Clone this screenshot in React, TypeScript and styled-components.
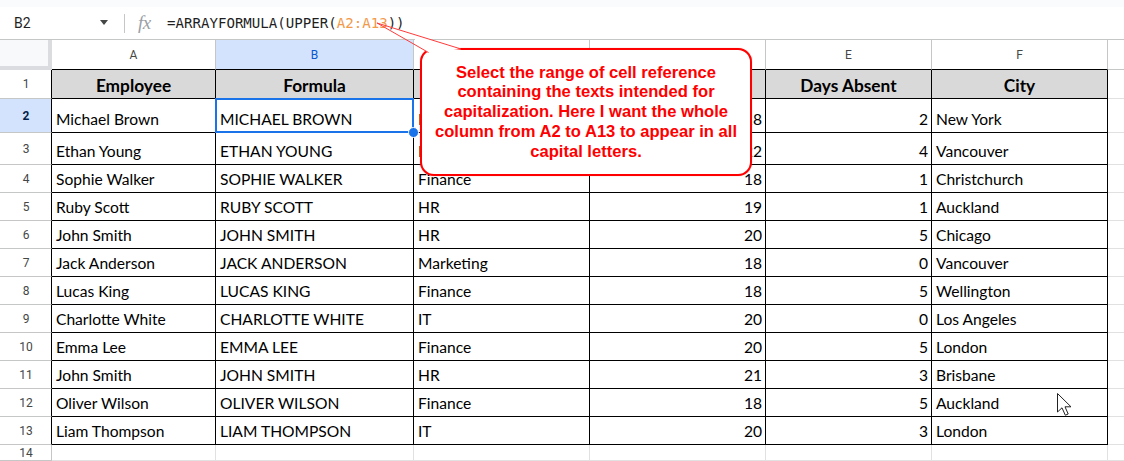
import React from "react";
import styled, { createGlobalStyle, css } from "styled-components";

const GlobalStyle = createGlobalStyle`
  html, body { margin: 0; padding: 0; background: #ffffff; overflow: hidden; }
  * { box-sizing: border-box; }
`;

const Page = styled.div`
  position: relative;
  width: 1124px;
  height: 461px;
  overflow: hidden;
  background: #ffffff;
`;

const TopStrip = styled.div`
  height: 7px;
  background: #f9fbfd;
`;

const FormulaBar = styled.div`
  display: flex;
  align-items: center;
  height: 33px;
  border-bottom: 1px solid #c4c7c5;
  background: #ffffff;
`;

const NameBox = styled.div`
  display: flex;
  align-items: center;
  justify-content: space-between;
  width: 112px;
  padding: 0 4px 0 14px;
  font-family: Roboto, "Liberation Sans", sans-serif;
  font-size: 14px;
  color: #1f1f1f;
  margin-top: -1px;
`;

const Caret = styled.span`
  width: 0;
  height: 0;
  border-left: 4.5px solid transparent;
  border-right: 4.5px solid transparent;
  border-top: 5px solid #444746;
`;

const Divider = styled.span`
  width: 1px;
  height: 19px;
  background: #c4c7c5;
  margin: 0 13px 0 12px;
`;

const Fx = styled.span`
  display: inline-block;
  width: 17px;
  font-family: "Liberation Serif", serif;
  font-style: italic;
  font-size: 19px;
  color: #9aa0a6;
  margin-right: 12px;
  letter-spacing: -0.5px;
`;

const Formula = styled.span`
  font-family: "DejaVu Sans Mono", "Liberation Mono", monospace;
  font-size: 14.1px;
  color: #1f1f1f;
  margin-top: -1px;
`;

const Ref = styled.span`
  color: #f2994a;
`;

const Sheet = styled.div`
  display: grid;
  grid-template-columns: 52px 164px 198px 176px 176px 166px 176px 1fr;
  grid-template-rows: 30px 29px 34px 32px repeat(10, 28px) 16px;
`;

const Corner = styled.div`
  background: #f8f9fa;
  border-right: 4px solid #dadce0;
  border-bottom: 4px solid #dadce0;
`;

const headerFont = css`
  font-family: Roboto, "Liberation Sans", sans-serif;
  font-size: 12px;
  display: flex;
  align-items: center;
  justify-content: center;
`;

const ColHeader = styled.div<{ $selected?: boolean; $edge?: boolean; $last?: boolean }>`
  ${headerFont};
  color: ${(p) => (p.$selected ? "#0b57d0" : "#444746")};
  background: ${(p) => (p.$selected ? "#d3e3fd" : "#ffffff")};
  border-right: ${(p) => (p.$last ? "none" : "1px solid #c4c7c5")};
  border-bottom: 1px solid ${(p) => (p.$edge ? "#000000" : "#c4c7c5")};
  padding-top: 1px;
`;

const RowHeader = styled.div<{ $selected?: boolean; $edge?: boolean }>`
  ${headerFont};
  color: ${(p) => (p.$selected ? "#041e49" : "#444746")};
  font-weight: ${(p) => (p.$selected ? 700 : 400)};
  background: ${(p) => (p.$selected ? "#d3e3fd" : "#ffffff")};
  border-right: 1px solid ${(p) => (p.$edge ? "#000000" : "#c4c7c5")};
  border-bottom: 1px solid #c4c7c5;
  padding-left: 1px;
`;

type Kind = "head" | "text" | "num" | "empty";

const Cell = styled.div<{ $kind: Kind; $boxed?: boolean; $last?: boolean; $selected?: boolean }>`
  position: relative;
  display: flex;
  align-items: flex-end;
  min-width: 0;
  overflow: ${(p) => (p.$selected ? "visible" : "hidden")};
  white-space: nowrap;
  font-family: Lato, "Open Sans", sans-serif;
  font-size: 15.6px;
  line-height: 18px;
  color: #000000;
  padding: 0 3px 4px 4px;
  border-right: ${(p) => (p.$last ? "none" : `1px solid ${p.$boxed ? "#000000" : "#e1e1e1"}`)};
  border-bottom: 1px solid ${(p) => (p.$boxed ? "#000000" : "#e1e1e1")};
  ${(p) =>
    p.$kind === "head" &&
    css`
      background: #d9d9d9;
      font-weight: 700;
      font-size: 17.3px;
      justify-content: center;
      padding: 0 0 3px 0;
    `}
  ${(p) =>
    p.$kind === "num" &&
    css`
      justify-content: flex-end;
    `}
  ${(p) =>
    p.$selected &&
    css`
      z-index: 2;
      &::before {
        content: "";
        position: absolute;
        left: -1px;
        top: -1px;
        right: -1px;
        bottom: -1px;
        border: 2px solid #1a73e8;
        pointer-events: none;
      }
      &::after {
        content: "";
        position: absolute;
        right: -6px;
        bottom: -6px;
        width: 9px;
        height: 9px;
        border-radius: 50%;
        background: #1a73e8;
        border: 1px solid #ffffff;
      }
    `}
`;

const Callout = styled.div`
  position: absolute;
  left: 420px;
  top: 48px;
  width: 332px;
  height: 128px;
  border: 2px solid #ff0000;
  border-radius: 14px;
  background: #ffffff;
  display: flex;
  align-items: center;
  justify-content: center;
  text-align: center;
  font-family: "Liberation Sans", Arial, sans-serif;
  font-weight: 700;
  font-size: 16.6px;
  line-height: 19.75px;
  color: #ff0000;
  padding: 0 10px;
  z-index: 5;
  box-shadow: 0 0 1px rgba(255, 0, 0, 0.5);
`;

const Overlay = styled.svg`
  position: absolute;
  left: 0;
  top: 0;
  width: 1124px;
  height: 461px;
  pointer-events: none;
  z-index: 6;
`;

const Cursor = styled.svg`
  position: absolute;
  left: 1056px;
  top: 392px;
  width: 20px;
  height: 28px;
  z-index: 7;
`;

const letters = ["A", "B", "C", "D", "E", "F", ""];
const heads = ["Employee", "Formula", "Department", "Days Present", "Days Absent", "City"];
const data: [string, string, number, number, string][] = [
  ["Michael Brown", "Marketing", 18, 2, "New York"],
  ["Ethan Young", "HR", 22, 4, "Vancouver"],
  ["Sophie Walker", "Finance", 18, 1, "Christchurch"],
  ["Ruby Scott", "HR", 19, 1, "Auckland"],
  ["John Smith", "HR", 20, 5, "Chicago"],
  ["Jack Anderson", "Marketing", 18, 0, "Vancouver"],
  ["Lucas King", "Finance", 18, 5, "Wellington"],
  ["Charlotte White", "IT", 20, 0, "Los Angeles"],
  ["Emma Lee", "Finance", 20, 5, "London"],
  ["John Smith", "HR", 21, 3, "Brisbane"],
  ["Oliver Wilson", "Finance", 18, 5, "Auckland"],
  ["Liam Thompson", "IT", 20, 3, "London"],
];

export default function App() {
  return (
    <Page>
      <GlobalStyle />
      <TopStrip />
      <FormulaBar>
        <NameBox>
          <span>B2</span>
          <Caret />
        </NameBox>
        <Divider />
        <Fx>fx</Fx>
        <Formula>
          =ARRAYFORMULA(UPPER(<Ref>A2:A13</Ref>))
        </Formula>
      </FormulaBar>
      <Sheet>
        <Corner />
        {letters.map((l, i) => (
          <ColHeader key={"h" + i} $selected={l === "B"} $edge={i < 6} $last={i === 6}>
            {l}
          </ColHeader>
        ))}

        <RowHeader $edge>1</RowHeader>
        {heads.map((h) => (
          <Cell key={h} $kind="head" $boxed>
            {h}
          </Cell>
        ))}
        <Cell $kind="empty" $last />

        {data.map((r, i) => {
          const n = i + 2;
          return (
            <React.Fragment key={n}>
              <RowHeader $edge $selected={n === 2}>
                {n}
              </RowHeader>
              <Cell $kind="text" $boxed>
                {r[0]}
              </Cell>
              <Cell $kind="text" $boxed $selected={n === 2}>
                {r[0].toUpperCase()}
              </Cell>
              <Cell $kind="text" $boxed>
                {r[1]}
              </Cell>
              <Cell $kind="num" $boxed>
                {r[2]}
              </Cell>
              <Cell $kind="num" $boxed>
                {r[3]}
              </Cell>
              <Cell $kind="text" $boxed>
                {r[4]}
              </Cell>
              <Cell $kind="empty" $last />
            </React.Fragment>
          );
        })}

        <RowHeader>14</RowHeader>
        {letters.map((_, i) => (
          <Cell key={"e" + i} $kind="empty" $last={i === 6} />
        ))}
      </Sheet>

      <Callout>
        Select the range of cell reference containing the texts intended for capitalization. Here I want the whole
        column from A2 to A13 to appear in all capital letters.
      </Callout>

      <Overlay viewBox="0 0 1124 461">
        <polygon points="415,34.8 461,49.2 428,52.5 415,44.6" fill="#ffffff" />
        <line x1="377" y1="23" x2="428.5" y2="52.5" stroke="#ff3b3b" strokeWidth="1" />
        <line x1="377" y1="23" x2="461" y2="49" stroke="#ff3b3b" strokeWidth="1" />
      </Overlay>

      <Cursor viewBox="0 0 20 28">
        <path
          d="M1.5 1.5 L1.5 20 L6 15.8 L9.3 23.2 L12.2 22 L9 14.8 L15 14.8 Z"
          fill="#ffffff"
          stroke="#222222"
          strokeWidth="1"
          strokeLinejoin="miter"
        />
      </Cursor>
    </Page>
  );
}
